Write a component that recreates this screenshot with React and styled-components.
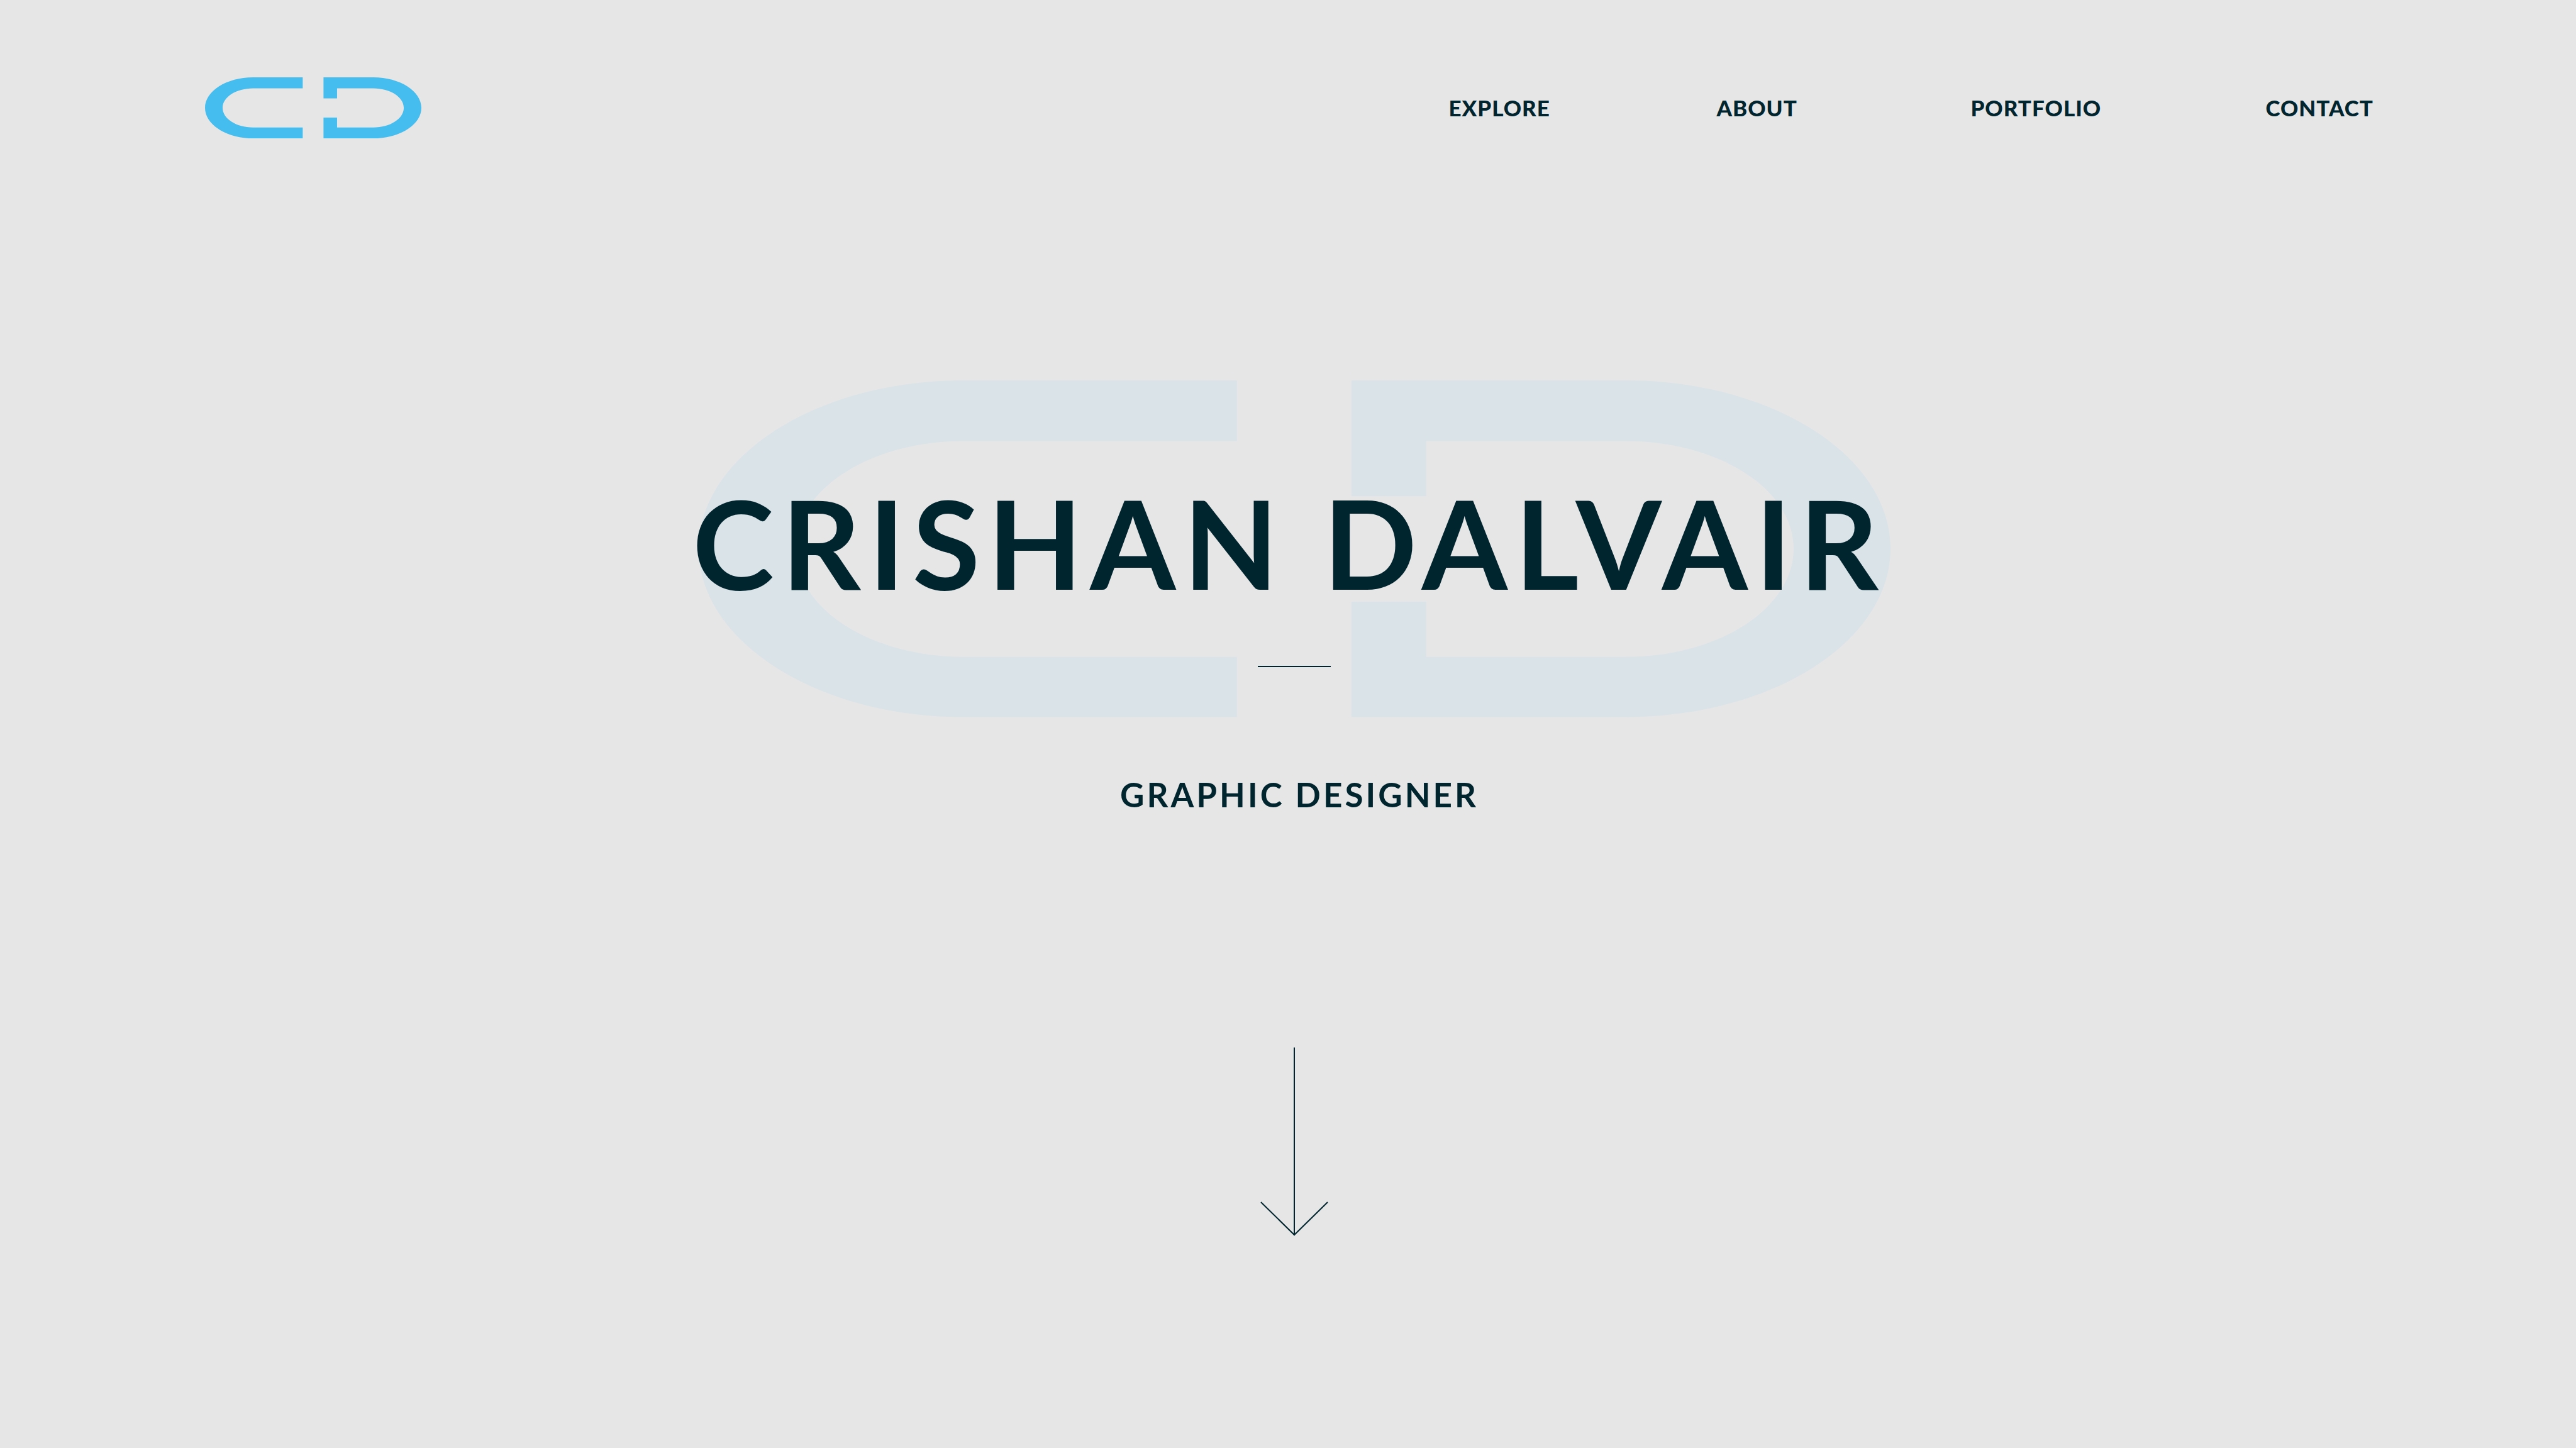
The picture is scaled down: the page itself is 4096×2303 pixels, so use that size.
import React from 'react';
import styled, { createGlobalStyle } from 'styled-components';

const ink = '#00252f';

const GlobalStyle = createGlobalStyle`
  * {
    box-sizing: border-box;
  }

  body {
    margin: 0;
    background: #e6e6e6;
    color: ${ink};
    font-family: Lato, 'Open Sans', sans-serif;
  }
`;

const Page = styled.div`
  display: flex;
  flex-direction: column;
  min-height: 100vh;
`;

const Header = styled.header`
  display: flex;
  align-items: center;
  justify-content: space-between;
  padding: 123px 322px 0 326px;
`;

const HomeLink = styled.a`
  display: block;
`;

const Mark = styled.svg`
  display: block;
  width: ${({ $width }) => $width}px;
  fill: ${({ $color }) => $color};
`;

const Nav = styled.nav`
  display: grid;
  grid-template-columns: 426px 404px 469px auto;
  padding-bottom: 2px;
`;

const NavLink = styled.a`
  color: inherit;
  font-size: 35px;
  font-weight: 900;
  line-height: 42px;
  letter-spacing: 1px;
  text-decoration: none;
`;

const Hero = styled.main`
  display: flex;
  flex-direction: column;
  align-items: center;
  padding-top: 385px;
`;

const Banner = styled.div`
  display: grid;
  justify-items: center;
  width: 100%;
`;

const Watermark = styled.div`
  grid-area: 1 / 1;
  padding-left: 20px;
`;

const Heading = styled.div`
  grid-area: 1 / 1;
  display: flex;
  flex-direction: column;
  align-items: center;
  gap: 98px;
  padding-top: 160px;
`;

const Name = styled.h1`
  margin: 0;
  padding-left: 4px;
  font-size: 196px;
  font-weight: 700;
  line-height: 196px;
  letter-spacing: 12px;
  white-space: nowrap;
`;

const RuleRow = styled.div`
  padding-left: 20px;
`;

const Rule = styled.hr`
  width: 116px;
  height: 2px;
  margin: 0;
  border: 0;
  background: ${ink};
`;

const Role = styled.p`
  margin: 95px 0 0;
  padding-left: 36px;
  font-size: 53px;
  font-weight: 700;
  line-height: 56px;
  letter-spacing: 4px;
`;

const ScrollLink = styled.a`
  display: block;
  margin-top: 374px;
  padding-left: 20px;
`;

const Arrow = styled.svg`
  display: block;
  width: 108px;
  height: 300px;
  fill: none;
  stroke: ${ink};
  stroke-width: 2px;
`;

function Monogram({ width, color }) {
  return (
    <Mark viewBox="0 0 2633 744" $width={width} $color={color} aria-hidden="true">
      <path d="M1189 0H585C262 0 0 167 0 372S262 744 585 744H1189V611H585C380 611 214 504 214 372S380 134 585 134H1189Z" />
      <path d="M1442 0H2048C2371 0 2633 167 2633 372S2371 744 2048 744H1442V489H1607V611H2048C2253 611 2419 504 2419 372S2253 134 2048 134H1607V256H1442Z" />
    </Mark>
  );
}

const links = ['Explore', 'About', 'Portfolio', 'Contact'];

export default function App() {
  return (
    <Page>
      <GlobalStyle />
      <Header>
        <HomeLink href="#home" aria-label="Crishan Dalvair">
          <Monogram width={344} color="#45bdee" />
        </HomeLink>
        <Nav>
          {links.map((link) => (
            <NavLink key={link} href={`#${link.toLowerCase()}`}>
              {link.toUpperCase()}
            </NavLink>
          ))}
        </Nav>
      </Header>
      <Hero>
        <Banner>
          <Watermark>
            <Monogram width={1895} color="#dae3e8" />
          </Watermark>
          <Heading>
            <Name>CRISHAN DALVAIR</Name>
            <RuleRow>
              <Rule />
            </RuleRow>
          </Heading>
        </Banner>
        <Role>GRAPHIC DESIGNER</Role>
        <ScrollLink href="#explore" aria-label="Scroll down">
          <Arrow viewBox="0 0 108 300">
            <path d="M54 0V299M1 246L54 298L107 246" />
          </Arrow>
        </ScrollLink>
      </Hero>
    </Page>
  );
}
